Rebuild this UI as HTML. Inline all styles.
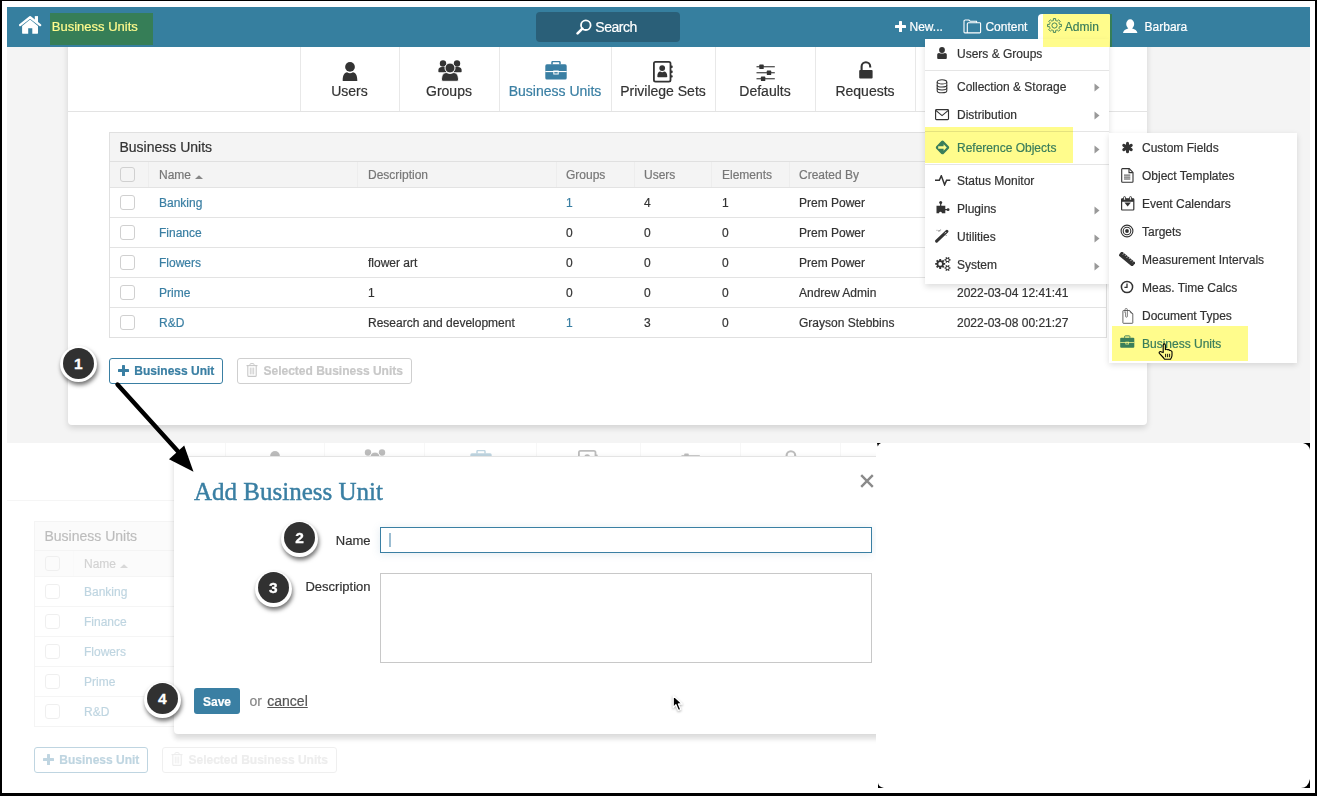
<!DOCTYPE html>
<html><head><meta charset="utf-8">
<style>
*{box-sizing:border-box;margin:0;padding:0}
html,body{width:1317px;height:796px;overflow:hidden;background:#000}
body{position:relative;font-family:"Liberation Sans",sans-serif;color:#333}
.a{position:absolute}
.t{position:absolute;line-height:1;white-space:nowrap;-webkit-text-stroke:0.2px currentColor}
#frame{position:absolute;left:2px;top:1px;width:1313px;height:792px;background:#fff}
#topclip{position:absolute;left:7px;top:7px;width:1303px;height:436px;overflow:hidden;background:#f4f4f4}
#topin{position:absolute;left:-7px;top:-7px;width:1317px;height:796px}
#botclip{position:absolute;left:7px;top:443px;width:869px;height:345px;overflow:hidden;background:#fff}
#botin{position:absolute;left:-7px;top:-443px;width:1317px;height:796px}
.circ{border-radius:50%;background:#333;border:2.5px solid #fff;box-shadow:1px 3px 4px rgba(0,0,0,.5);color:#fff;font-weight:bold;font-size:15px;text-align:center;line-height:28px}
</style></head><body>
<div id="frame"></div>
<div id="topclip"><div id="topin">
<div class="a" style="left:68px;top:-20px;width:1079px;height:445px;background:#fff;border-radius:4px;box-shadow:0 3px 6px rgba(0,0,0,.14)"></div>
<div class="a" style="left:300px;top:40px;width:1px;height:71px;background:#e8e8e8"></div>
<div class="a" style="left:399px;top:40px;width:1px;height:71px;background:#e8e8e8"></div>
<div class="a" style="left:499px;top:40px;width:1px;height:71px;background:#e8e8e8"></div>
<div class="a" style="left:611px;top:40px;width:1px;height:71px;background:#e8e8e8"></div>
<div class="a" style="left:715px;top:40px;width:1px;height:71px;background:#e8e8e8"></div>
<div class="a" style="left:815px;top:40px;width:1px;height:71px;background:#e8e8e8"></div>
<div class="a" style="left:915px;top:40px;width:1px;height:71px;background:#e8e8e8"></div>
<div class="a" style="left:68px;top:111px;width:1079px;height:1px;background:#e3e3e3"></div>
<div class="t" style="left:300.0px;width:99px;text-align:center;top:84.2px;font-size:14px;color:#333;">Users</div>
<div class="t" style="left:399.0px;width:100px;text-align:center;top:84.2px;font-size:14px;color:#333;">Groups</div>
<div class="t" style="left:499.0px;width:112px;text-align:center;top:84.2px;font-size:14px;color:#3a7fa3;">Business Units</div>
<div class="t" style="left:611.0px;width:104px;text-align:center;top:84.2px;font-size:14px;color:#333;">Privilege Sets</div>
<div class="t" style="left:715.0px;width:100px;text-align:center;top:84.2px;font-size:14px;color:#333;">Defaults</div>
<div class="t" style="left:815.0px;width:100px;text-align:center;top:84.2px;font-size:14px;color:#333;">Requests</div>
<svg class="a" style="left:342px;top:61.6px;" width="16" height="19.5" viewBox="0 0 16 20"><circle cx="8" cy="5" r="5" fill="#333"/><path d="M0.5 19 C0.5 14 2 11 5 10.6 Q8 12.6 11 10.6 C14 11 15.5 14 15.5 19 Q15.5 20 14.5 20 L1.5 20 Q0.5 20 0.5 19Z" fill="#333"/></svg>
<svg class="a" style="left:437.5px;top:60px;" width="24" height="22" viewBox="0 0 24 22">
<circle cx="5" cy="3.5" r="3.2" fill="#333"/><circle cx="19" cy="3.5" r="3.2" fill="#333"/>
<path d="M0.3 11 C0.3 8 1.5 7 4 7 L8 7 L8 12.3 L1 12.3 Q0.3 12.3 0.3 11Z" fill="#333"/>
<path d="M23.7 11 C23.7 8 22.5 7 20 7 L16 7 L16 12.3 L23 12.3 Q23.7 12.3 23.7 11Z" fill="#333"/>
<circle cx="12" cy="8" r="5" fill="#333" stroke="#fff" stroke-width="1"/>
<path d="M3.5 20 C3.5 15 5.5 12.6 8.5 12.6 Q12 14.6 15.5 12.6 C18.5 12.6 20.5 15 20.5 20 Q20.5 21.3 19 21.3 L5 21.3 Q3.5 21.3 3.5 20Z" fill="#333" stroke="#fff" stroke-width="0.9"/>
</svg>
<svg class="a" style="left:544.5px;top:60.5px;" width="22" height="19" viewBox="0 0 22 19">
<path d="M7 3.5 V1.6 Q7 0.6 8 0.6 H14 Q15 0.6 15 1.6 V3.5" fill="none" stroke="#3a7fa3" stroke-width="1.5"/>
<rect x="0.3" y="3.3" width="21.4" height="15.2" rx="1.6" fill="#3a7fa3"/>
<rect x="0.3" y="10" width="21.4" height="1.1" fill="#fff"/>
<rect x="8.8" y="10" width="4.4" height="3" fill="none" stroke="#fff" stroke-width="1"/>
</svg>
<svg class="a" style="left:652.5px;top:60.5px;" width="21" height="22" viewBox="0 0 21 22">
<rect x="0.9" y="0.9" width="16.6" height="19.7" rx="1.6" fill="none" stroke="#333" stroke-width="1.8"/>
<rect x="17.5" y="4.6" width="2.2" height="2.4" rx="0.8" fill="#333"/>
<rect x="17.5" y="9.6" width="2.2" height="2.4" rx="0.8" fill="#333"/>
<rect x="17.5" y="14.2" width="2.2" height="2.4" rx="0.8" fill="#333"/>
<circle cx="9.2" cy="7.1" r="2.9" fill="#333"/>
<path d="M4.3 15.5 C4.3 12.3 5.6 10.6 7.3 10.6 Q9.2 11.8 11.1 10.6 C12.8 10.6 14.3 12.3 14.3 15.5 Q14.3 16.3 13.5 16.3 L5.1 16.3 Q4.3 16.3 4.3 15.5Z" fill="#333"/>
</svg>
<svg class="a" style="left:756px;top:63.5px;" width="20" height="17" viewBox="0 0 20 17">
<rect x="0.5" y="2.2" width="18.3" height="1.1" fill="#333"/>
<rect x="0.5" y="8.2" width="18.3" height="1.1" fill="#333"/>
<rect x="0.5" y="14.2" width="18.3" height="1.1" fill="#333"/>
<rect x="3.3" y="0.6" width="4.4" height="4.4" rx="0.6" fill="#333"/>
<rect x="10.8" y="6.6" width="4.4" height="4.4" rx="0.6" fill="#333"/>
<rect x="4.9" y="12.6" width="4.4" height="4.4" rx="0.6" fill="#333"/>
</svg>
<svg class="a" style="left:859px;top:61px;" width="15" height="19" viewBox="0 0 15 19">
<path d="M2.6 9.5 V5.5 A4.3 4.3 0 0 1 11.2 5.5 V6.5" fill="none" stroke="#333" stroke-width="2.1"/>
<rect x="0.2" y="8.9" width="13.4" height="8.6" rx="1" fill="#333"/>
</svg>
<div class="a" style="left:109px;top:132px;width:998px;height:206px;border:1px solid #e0e0e0;background:#fff"></div>
<div class="a" style="left:110px;top:133px;width:996px;height:54px;background:#f4f4f4"></div>
<div class="a" style="left:110px;top:161px;width:996px;height:1px;background:#e0e0e0"></div>
<div class="a" style="left:110px;top:187px;width:996px;height:1px;background:#e3e3e3"></div>
<div class="a" style="left:110px;top:217px;width:996px;height:1px;background:#e3e3e3"></div>
<div class="a" style="left:110px;top:247px;width:996px;height:1px;background:#e3e3e3"></div>
<div class="a" style="left:110px;top:277px;width:996px;height:1px;background:#e3e3e3"></div>
<div class="a" style="left:110px;top:307px;width:996px;height:1px;background:#e3e3e3"></div>
<div class="a" style="left:148px;top:162px;width:1px;height:25px;background:#ededed"></div>
<div class="a" style="left:357px;top:162px;width:1px;height:25px;background:#ededed"></div>
<div class="a" style="left:556px;top:162px;width:1px;height:25px;background:#ededed"></div>
<div class="a" style="left:634px;top:162px;width:1px;height:25px;background:#ededed"></div>
<div class="a" style="left:711px;top:162px;width:1px;height:25px;background:#ededed"></div>
<div class="a" style="left:789px;top:162px;width:1px;height:25px;background:#ededed"></div>
<div class="a" style="left:946px;top:162px;width:1px;height:25px;background:#ededed"></div>
<div class="t" style="left:119.5px;top:140px;font-size:14px;color:#333;">Business Units</div>
<div class="a" style="left:120px;top:167px;width:15px;height:15px;border:1px solid #d0d0d0;border-radius:3px;background:#f4f4f4"></div>
<div class="t" style="left:159px;top:169px;font-size:12px;color:#777;">Name</div>
<div class="t" style="left:368px;top:169px;font-size:12px;color:#777;">Description</div>
<div class="t" style="left:566px;top:169px;font-size:12px;color:#777;">Groups</div>
<div class="t" style="left:644px;top:169px;font-size:12px;color:#777;">Users</div>
<div class="t" style="left:722px;top:169px;font-size:12px;color:#777;">Elements</div>
<div class="t" style="left:799px;top:169px;font-size:12px;color:#777;">Created By</div>
<div class="t" style="left:957px;top:169px;font-size:12px;color:#777;">Created</div>
<svg class="a" style="left:195px;top:174.5px;" width="8" height="4" viewBox="0 0 8 4"><path d="M0 4 L4 0.2 L8 4Z" fill="#888"/></svg>
<div class="a" style="left:120px;top:195px;width:15px;height:15px;border:1px solid #d0d0d0;border-radius:3px;background:#fff"></div>
<div class="t" style="left:159px;top:197px;font-size:12px;color:#3a7fa3;">Banking</div>
<div class="t" style="left:368px;top:197px;font-size:12px;color:#333;"></div>
<div class="t" style="left:566px;top:197px;font-size:12px;color:#3a7fa3;">1</div>
<div class="t" style="left:644px;top:197px;font-size:12px;color:#333;">4</div>
<div class="t" style="left:722px;top:197px;font-size:12px;color:#333;">1</div>
<div class="t" style="left:799px;top:197px;font-size:12px;color:#333;">Prem Power</div>
<div class="t" style="left:957px;top:197px;font-size:12px;color:#333;">2022-02-28 10:14:12</div>
<div class="a" style="left:120px;top:225px;width:15px;height:15px;border:1px solid #d0d0d0;border-radius:3px;background:#fff"></div>
<div class="t" style="left:159px;top:227px;font-size:12px;color:#3a7fa3;">Finance</div>
<div class="t" style="left:368px;top:227px;font-size:12px;color:#333;"></div>
<div class="t" style="left:566px;top:227px;font-size:12px;color:#333;">0</div>
<div class="t" style="left:644px;top:227px;font-size:12px;color:#333;">0</div>
<div class="t" style="left:722px;top:227px;font-size:12px;color:#333;">0</div>
<div class="t" style="left:799px;top:227px;font-size:12px;color:#333;">Prem Power</div>
<div class="t" style="left:957px;top:227px;font-size:12px;color:#333;">2022-02-28 10:14:40</div>
<div class="a" style="left:120px;top:255px;width:15px;height:15px;border:1px solid #d0d0d0;border-radius:3px;background:#fff"></div>
<div class="t" style="left:159px;top:257px;font-size:12px;color:#3a7fa3;">Flowers</div>
<div class="t" style="left:368px;top:257px;font-size:12px;color:#333;">flower art</div>
<div class="t" style="left:566px;top:257px;font-size:12px;color:#333;">0</div>
<div class="t" style="left:644px;top:257px;font-size:12px;color:#333;">0</div>
<div class="t" style="left:722px;top:257px;font-size:12px;color:#333;">0</div>
<div class="t" style="left:799px;top:257px;font-size:12px;color:#333;">Prem Power</div>
<div class="t" style="left:957px;top:257px;font-size:12px;color:#333;">2022-02-28 10:15:02</div>
<div class="a" style="left:120px;top:285px;width:15px;height:15px;border:1px solid #d0d0d0;border-radius:3px;background:#fff"></div>
<div class="t" style="left:159px;top:287px;font-size:12px;color:#3a7fa3;">Prime</div>
<div class="t" style="left:368px;top:287px;font-size:12px;color:#333;">1</div>
<div class="t" style="left:566px;top:287px;font-size:12px;color:#333;">0</div>
<div class="t" style="left:644px;top:287px;font-size:12px;color:#333;">0</div>
<div class="t" style="left:722px;top:287px;font-size:12px;color:#333;">0</div>
<div class="t" style="left:799px;top:287px;font-size:12px;color:#333;">Andrew Admin</div>
<div class="t" style="left:957px;top:287px;font-size:12px;color:#333;">2022-03-04 12:41:41</div>
<div class="a" style="left:120px;top:315px;width:15px;height:15px;border:1px solid #d0d0d0;border-radius:3px;background:#fff"></div>
<div class="t" style="left:159px;top:317px;font-size:12px;color:#3a7fa3;">R&amp;D</div>
<div class="t" style="left:368px;top:317px;font-size:12px;color:#333;">Research and development</div>
<div class="t" style="left:566px;top:317px;font-size:12px;color:#3a7fa3;">1</div>
<div class="t" style="left:644px;top:317px;font-size:12px;color:#333;">3</div>
<div class="t" style="left:722px;top:317px;font-size:12px;color:#333;">0</div>
<div class="t" style="left:799px;top:317px;font-size:12px;color:#333;">Grayson Stebbins</div>
<div class="t" style="left:957px;top:317px;font-size:12px;color:#333;">2022-03-08 00:21:27</div>
<div class="a" style="left:109px;top:358px;width:114px;height:26px;border:1px solid #3a7fa3;border-radius:3px;background:#fff"></div>
<svg class="a" style="left:118px;top:365px;" width="11" height="11" viewBox="0 0 11 11"><rect x="0" y="4.0" width="11" height="3" rx="0.6" fill="#3a7fa3"/><rect x="4.0" y="0" width="3" height="11" rx="0.6" fill="#3a7fa3"/></svg>
<div class="t" style="left:134.3px;top:365px;font-size:12px;color:#3a7fa3;font-weight:bold;">Business Unit</div>
<div class="a" style="left:237px;top:358px;width:175px;height:26px;border:1px solid #cfcfcf;border-radius:3px;background:#fff"></div>
<svg class="a" style="left:246px;top:362.8px;" width="12" height="14" viewBox="0 0 12 14">
<path d="M0.5 2.6 H11.5" stroke="#c8c8c8" stroke-width="1.1"/>
<path d="M4 2.6 V1.4 Q4 0.6 4.8 0.6 H7.2 Q8 0.6 8 1.4 V2.6" fill="none" stroke="#c8c8c8" stroke-width="1"/>
<path d="M1.8 2.6 V12.4 Q1.8 13.4 2.8 13.4 H9.2 Q10.2 13.4 10.2 12.4 V2.6" fill="none" stroke="#c8c8c8" stroke-width="1.1"/>
<path d="M4.3 4.6 V11.4 M6 4.6 V11.4 M7.7 4.6 V11.4" stroke="#c8c8c8" stroke-width="0.9"/>
</svg>
<div class="t" style="left:263.5px;top:365px;font-size:12px;color:#c8c8c8;font-weight:bold;">Selected Business Units</div>
<div class="a" style="left:0px;top:7px;width:1317px;height:40px;background:#367f9f"></div>
<svg class="a" style="left:19px;top:15px;" width="23" height="20" viewBox="0 0 23 20">
<path d="M1.1 10.1 L11.1 2.3 L21.1 10.1" fill="none" stroke="#fff" stroke-width="2.4" stroke-linecap="round" stroke-linejoin="round"/>
<rect x="15.8" y="1.1" width="3.2" height="6" fill="#fff"/>
<path d="M3.1 10.9 L11.1 4.6 L19 10.9 V18.1 Q19 18.7 18.4 18.7 H13.3 V13.2 H9.2 V18.7 H3.7 Q3.1 18.7 3.1 18.1Z" fill="#fff"/>
</svg>
<div class="a" style="left:536px;top:12px;width:144px;height:30px;background:#2a5f78;border-radius:4px"></div>
<svg class="a" style="left:575.5px;top:19px;" width="16" height="16" viewBox="0 0 16 16">
<circle cx="9.8" cy="6.2" r="4.8" fill="none" stroke="#fff" stroke-width="1.8"/>
<path d="M6.4 9.6 L1.6 14.4" stroke="#fff" stroke-width="2.6" stroke-linecap="round"/>
</svg>
<div class="t" style="left:595.3px;top:20px;font-size:14px;color:#fff;letter-spacing:-0.45px;">Search</div>
<svg class="a" style="left:894.8px;top:21px;" width="11" height="11" viewBox="0 0 11 11"><rect x="0" y="4.0" width="11" height="3" rx="0.6" fill="#fff"/><rect x="4.0" y="0" width="3" height="11" rx="0.6" fill="#fff"/></svg>
<div class="t" style="left:909.5px;top:21px;font-size:12px;color:#fff;">New...</div>
<svg class="a" style="left:962.5px;top:18.5px;" width="19" height="15" viewBox="0 0 19 15">
<path d="M1 13 V2.2 Q1 1 2.2 1 H5.8 L7.1 2.2 H13.6 V3.7" fill="none" stroke="#fff" stroke-width="1.1" stroke-linejoin="round"/>
<path d="M4.3 13.9 V4.9 Q4.3 3.7 5.5 3.7 H16.7 Q17.6 3.7 17.6 4.6 V13 Q17.6 13.9 16.7 13.9 H2 Q1 13.9 1 13" fill="none" stroke="#fff" stroke-width="1.1" stroke-linejoin="round"/>
</svg>
<div class="t" style="left:985.4px;top:21px;font-size:12px;color:#fff;">Content</div>
<svg class="a" style="left:1123px;top:18.8px;" width="15" height="15" viewBox="0 0 15 15"><ellipse cx="7.2" cy="4.9" rx="4" ry="4.6" fill="#fff"/><path d="M5.3 8.6 H9.1 L9.3 9.6 Q13.6 10.6 14.3 13.6 V14.1 H0.1 V13.6 Q0.8 10.6 5.1 9.6Z" fill="#fff"/></svg>
<div class="t" style="left:1144.6px;top:21px;font-size:12px;color:#fff;">Barbara</div>
<div class="a" style="left:1038px;top:14px;width:72px;height:40px;background:#fff;border-radius:4px 1px 0 0"></div>
<svg class="a" style="left:1046.5px;top:18.4px;" width="15" height="15" viewBox="0 0 15 15"><path d="M6.35 2.53 L6.35 0.60 L8.65 0.60 L8.65 2.53 A5.1 5.1 0 0 1 10.20 3.17 L11.57 1.81 L13.19 3.43 L11.83 4.80 A5.1 5.1 0 0 1 12.47 6.35 L14.40 6.35 L14.40 8.65 L12.47 8.65 A5.1 5.1 0 0 1 11.83 10.20 L13.19 11.57 L11.57 13.19 L10.20 11.83 A5.1 5.1 0 0 1 8.65 12.47 L8.65 14.40 L6.35 14.40 L6.35 12.47 A5.1 5.1 0 0 1 4.80 11.83 L3.43 13.19 L1.81 11.57 L3.17 10.20 A5.1 5.1 0 0 1 2.53 8.65 L0.60 8.65 L0.60 6.35 L2.53 6.35 A5.1 5.1 0 0 1 3.17 4.80 L1.81 3.43 L3.43 1.81 L4.80 3.17 A5.1 5.1 0 0 1 6.35 2.53Z" fill="none" stroke="#3a7fa3" stroke-width="0.95" stroke-linejoin="round"/><circle cx="7.5" cy="7.5" r="2.6" fill="none" stroke="#3a7fa3" stroke-width="0.95"/></svg>
<div class="t" style="left:1064.8px;top:21px;font-size:12px;color:#3a7fa3;">Admin</div>
<div class="t" style="left:51.8px;top:19.8px;font-size:13px;color:#fff;">Business Units</div>
<div class="a" style="left:50px;top:13px;width:103px;height:32px;background:#fffc8c;mix-blend-mode:multiply"></div>
<div class="a" style="left:925px;top:39px;width:184px;height:245px;background:#fff;box-shadow:0 3px 6px rgba(0,0,0,.13)"></div>
<div class="a" style="left:925px;top:70px;width:184px;height:1px;background:#e5e5e5"></div>
<div class="a" style="left:925px;top:131px;width:184px;height:1px;background:#e5e5e5"></div>
<div class="a" style="left:925px;top:164px;width:184px;height:1px;background:#e5e5e5"></div>
<div class="t" style="left:957px;top:48px;font-size:12px;color:#333;">Users &amp; Groups</div>
<div class="t" style="left:957px;top:80.6px;font-size:12px;color:#333;">Collection &amp; Storage</div>
<svg class="a" style="left:1093.5px;top:83.1px;" width="6" height="9" viewBox="0 0 6 9"><path d="M0.5 0.5 L5.5 4.5 L0.5 8.5Z" fill="#999"/></svg>
<div class="t" style="left:957px;top:108.7px;font-size:12px;color:#333;">Distribution</div>
<svg class="a" style="left:1093.5px;top:111.2px;" width="6" height="9" viewBox="0 0 6 9"><path d="M0.5 0.5 L5.5 4.5 L0.5 8.5Z" fill="#999"/></svg>
<div class="t" style="left:957px;top:142px;font-size:12px;color:#3a7fa3;">Reference Objects</div>
<svg class="a" style="left:1093.5px;top:144.5px;" width="6" height="9" viewBox="0 0 6 9"><path d="M0.5 0.5 L5.5 4.5 L0.5 8.5Z" fill="#999"/></svg>
<div class="t" style="left:957px;top:175px;font-size:12px;color:#333;">Status Monitor</div>
<div class="t" style="left:957px;top:203px;font-size:12px;color:#333;">Plugins</div>
<svg class="a" style="left:1093.5px;top:205.5px;" width="6" height="9" viewBox="0 0 6 9"><path d="M0.5 0.5 L5.5 4.5 L0.5 8.5Z" fill="#999"/></svg>
<div class="t" style="left:957px;top:231px;font-size:12px;color:#333;">Utilities</div>
<svg class="a" style="left:1093.5px;top:233.5px;" width="6" height="9" viewBox="0 0 6 9"><path d="M0.5 0.5 L5.5 4.5 L0.5 8.5Z" fill="#999"/></svg>
<div class="t" style="left:957px;top:259px;font-size:12px;color:#333;">System</div>
<svg class="a" style="left:1093.5px;top:261.5px;" width="6" height="9" viewBox="0 0 6 9"><path d="M0.5 0.5 L5.5 4.5 L0.5 8.5Z" fill="#999"/></svg>
<svg class="a" style="left:937.2px;top:46.9px;" width="11" height="13" viewBox="0 0 11 13"><circle cx="5" cy="3" r="2.9" fill="#333"/><path d="M0.2 7.6 Q0.2 5.9 2 5.9 Q5 7.1 8 5.9 Q9.8 5.9 9.8 7.6 V11 Q9.8 11.9 8.9 11.9 H1.1 Q0.2 11.9 0.2 11Z" fill="#333"/></svg>
<svg class="a" style="left:936px;top:79px;" width="12" height="15" viewBox="0 0 12 15">
<ellipse cx="6" cy="2.9" rx="4.8" ry="2.1" fill="none" stroke="#333" stroke-width="1.05"/>
<path d="M1.2 2.9 V11.7 Q1.2 13.8 6 13.8 Q10.8 13.8 10.8 11.7 V2.9" fill="none" stroke="#333" stroke-width="1.05"/>
<path d="M1.2 5.9 Q1.2 8 6 8 Q10.8 8 10.8 5.9" fill="none" stroke="#333" stroke-width="1.05"/>
<path d="M1.2 8.8 Q1.2 10.9 6 10.9 Q10.8 10.9 10.8 8.8" fill="none" stroke="#333" stroke-width="1.05"/>
</svg>
<svg class="a" style="left:935px;top:108.5px;" width="15" height="12" viewBox="0 0 15 12">
<rect x="0.6" y="0.6" width="12.9" height="10" rx="0.9" fill="none" stroke="#333" stroke-width="1.15"/>
<path d="M0.8 1.4 L7.05 6.6 L13.3 1.4" fill="none" stroke="#333" stroke-width="1.15"/>
</svg>
<svg class="a" style="left:935px;top:140px;" width="15" height="15" viewBox="0 0 15 15">
<path d="M7.5 0.6 Q8.1 0.6 8.6 1.1 L13.9 6.4 Q14.5 7 13.9 8.6 L8.6 13.9 Q8 14.5 6.4 13.9 L1.1 8.6 Q0.5 8 1.1 6.4 L6.4 1.1 Q6.9 0.6 7.5 0.6Z" fill="#3a7fa3"/>
<path d="M3.2 6.3 H8.6 V4.2 L11.8 7.5 L8.6 10.8 V8.7 H3.2Z" fill="#fff"/>
</svg>
<svg class="a" style="left:934.5px;top:175px;" width="16" height="11" viewBox="0 0 16 11"><path d="M0 5.3 H4.3 L6.3 0.8 L9.6 9.8 L11.6 5.2 H15.3" fill="none" stroke="#333" stroke-width="1.5" stroke-linejoin="miter"/></svg>
<svg class="a" style="left:935.5px;top:200.5px;" width="14" height="13" viewBox="0 0 14 13">
<path d="M0.5 4.7 H4.1 V1.5 H5.3 V4.7 H9.3 V8.1 H12 V9.3 H9.3 V12.2 H5.9 A1.4 1.4 0 0 0 3.1 12.2 H0.5Z" fill="#333"/>
<circle cx="4.7" cy="1.6" r="1.5" fill="#333"/><circle cx="12.1" cy="8.7" r="1.4" fill="#333"/>
</svg>
<svg class="a" style="left:935px;top:229px;" width="14" height="14" viewBox="0 0 14 14">
<path d="M1.6 12.1 L11.9 2.3" stroke="#333" stroke-width="3" stroke-linecap="round"/>
<path d="M9.8 4.4 L11.2 3" stroke="#fff" stroke-width="0.8"/>
<path d="M3.6 2.4 L4.6 1.4 M3.6 1.4 L4.6 2.4 M2 0.9 V1.6 M5.6 0.6 V1.4 M11.2 6.1 V6.9" stroke="#333" stroke-width="0.7"/>
</svg>
<svg class="a" style="left:933.5px;top:256px;" width="17" height="17" viewBox="0 0 17 17"><path d="M5.25 4.32 L5.25 2.90 L7.15 2.90 L7.15 4.32 A3.7 3.7 0 0 1 8.06 4.70 L9.06 3.69 L10.41 5.04 L9.40 6.04 A3.7 3.7 0 0 1 9.78 6.95 L11.20 6.95 L11.20 8.85 L9.78 8.85 A3.7 3.7 0 0 1 9.40 9.76 L10.41 10.76 L9.06 12.11 L8.06 11.10 A3.7 3.7 0 0 1 7.15 11.48 L7.15 12.90 L5.25 12.90 L5.25 11.48 A3.7 3.7 0 0 1 4.34 11.10 L3.34 12.11 L1.99 10.76 L3.00 9.76 A3.7 3.7 0 0 1 2.62 8.85 L1.20 8.85 L1.20 6.95 L2.62 6.95 A3.7 3.7 0 0 1 3.00 6.04 L1.99 5.04 L3.34 3.69 L4.34 4.70 A3.7 3.7 0 0 1 5.25 4.32Z" fill="#333"/><circle cx="6.2" cy="7.9" r="1.9" fill="#fff"/><path d="M15.62 3.30 L16.60 3.30 L16.60 4.50 L15.62 4.50 A2.2 2.2 0 0 1 15.08 5.43 L15.57 6.28 L14.53 6.88 L14.04 6.03 A2.2 2.2 0 0 1 12.96 6.03 L12.47 6.88 L11.43 6.28 L11.92 5.43 A2.2 2.2 0 0 1 11.38 4.50 L10.40 4.50 L10.40 3.30 L11.38 3.30 A2.2 2.2 0 0 1 11.92 2.37 L11.43 1.52 L12.47 0.92 L12.96 1.77 A2.2 2.2 0 0 1 14.04 1.77 L14.53 0.92 L15.57 1.52 L15.08 2.37 A2.2 2.2 0 0 1 15.62 3.30Z" fill="#333"/><circle cx="13.5" cy="3.9" r="1.2" fill="#fff"/><path d="M15.62 11.40 L16.60 11.40 L16.60 12.60 L15.62 12.60 A2.2 2.2 0 0 1 15.08 13.53 L15.57 14.38 L14.53 14.98 L14.04 14.13 A2.2 2.2 0 0 1 12.96 14.13 L12.47 14.98 L11.43 14.38 L11.92 13.53 A2.2 2.2 0 0 1 11.38 12.60 L10.40 12.60 L10.40 11.40 L11.38 11.40 A2.2 2.2 0 0 1 11.92 10.47 L11.43 9.62 L12.47 9.02 L12.96 9.87 A2.2 2.2 0 0 1 14.04 9.87 L14.53 9.02 L15.57 9.62 L15.08 10.47 A2.2 2.2 0 0 1 15.62 11.40Z" fill="#333"/><circle cx="13.5" cy="12" r="1.2" fill="#fff"/></svg>
<div class="a" style="left:1043px;top:14px;width:68.5px;height:33px;background:#fffc8c;mix-blend-mode:multiply"></div>
<div class="a" style="left:925px;top:127px;width:148px;height:36px;background:#fffc8c;mix-blend-mode:multiply"></div>
<div class="a" style="left:1109px;top:133px;width:188px;height:230px;background:#fff;box-shadow:0 2px 6px rgba(0,0,0,.13)"></div>
<div class="t" style="left:1142px;top:142.3px;font-size:12px;color:#333;">Custom Fields</div>
<div class="t" style="left:1142px;top:170.3px;font-size:12px;color:#333;">Object Templates</div>
<div class="t" style="left:1142px;top:198.3px;font-size:12px;color:#333;">Event Calendars</div>
<div class="t" style="left:1142px;top:226.3px;font-size:12px;color:#333;">Targets</div>
<div class="t" style="left:1142px;top:254.3px;font-size:12px;color:#333;">Measurement Intervals</div>
<div class="t" style="left:1142px;top:282.3px;font-size:12px;color:#333;">Meas. Time Calcs</div>
<div class="t" style="left:1142px;top:310.3px;font-size:12px;color:#333;">Document Types</div>
<div class="t" style="left:1142px;top:338.3px;font-size:12px;color:#3a7fa3;">Business Units</div>
<svg class="a" style="left:1120.8px;top:140.5px;" width="13" height="13" viewBox="0 0 13 13"><circle cx="6.5" cy="6.5" r="3" fill="#333"/><rect x="-1.5" y="-5.8" width="3" height="11.6" rx="1.5" fill="#333" transform="translate(6.5 6.5) rotate(0)"/><rect x="-1.5" y="-5.8" width="3" height="11.6" rx="1.5" fill="#333" transform="translate(6.5 6.5) rotate(-60)"/><rect x="-1.5" y="-5.8" width="3" height="11.6" rx="1.5" fill="#333" transform="translate(6.5 6.5) rotate(60)"/></svg>
<svg class="a" style="left:1121px;top:167.5px;" width="13" height="15" viewBox="0 0 13 15">
<path d="M0.7 1.3 Q0.7 0.6 1.4 0.6 H8.2 L12 4.4 V13.6 Q12 14.3 11.3 14.3 H1.4 Q0.7 14.3 0.7 13.6Z" fill="none" stroke="#333" stroke-width="1.1"/>
<path d="M8 0.8 V4.6 H11.8" fill="none" stroke="#333" stroke-width="1.1"/>
<path d="M3 7.1 H9.3 M3 9.1 H9.3 M3 11 H9.3" stroke="#333" stroke-width="0.9"/>
</svg>
<svg class="a" style="left:1120.5px;top:195.5px;" width="14" height="15" viewBox="0 0 14 15">
<rect x="0.6" y="2.8" width="12.2" height="11.2" rx="0.7" fill="none" stroke="#333" stroke-width="1.2"/>
<rect x="0.6" y="2.8" width="12.2" height="3" fill="#333"/>
<rect x="2.6" y="0.7" width="1.9" height="3.4" rx="0.6" fill="#fff" stroke="#333" stroke-width="0.9"/>
<rect x="8.6" y="0.7" width="1.9" height="3.4" rx="0.6" fill="#fff" stroke="#333" stroke-width="0.9"/>
<path d="M3.4 6.4 H9.9 L6.65 10.5Z" fill="#333"/>
</svg>
<svg class="a" style="left:1120px;top:224px;" width="14" height="14" viewBox="0 0 14 14">
<circle cx="7" cy="7" r="5.9" fill="none" stroke="#333" stroke-width="1.1"/>
<circle cx="7" cy="7" r="3.8" fill="none" stroke="#333" stroke-width="1.1"/>
<circle cx="7" cy="7" r="1.9" fill="#333"/>
</svg>
<svg class="a" style="left:1119px;top:252.2px;" width="16" height="14" viewBox="0 0 16 14">
<g transform="translate(8 7) rotate(40)">
<rect x="-9" y="-2.6" width="18" height="5.2" fill="#333"/>
<path d="M-6 -2.6 V-0.6 M-3.5 -2.6 V-1.2 M-1 -2.6 V-0.6 M1.5 -2.6 V-1.2 M4 -2.6 V-0.6 M6.5 -2.6 V-1.2" stroke="#fff" stroke-width="0.6"/>
</g></svg>
<svg class="a" style="left:1119.9px;top:279.8px;" width="14" height="14" viewBox="0 0 14 14">
<circle cx="7" cy="7" r="5.6" fill="none" stroke="#333" stroke-width="1.5"/>
<path d="M7 3.4 V7.3 H4.4" fill="none" stroke="#333" stroke-width="1.3"/>
</svg>
<svg class="a" style="left:1121.5px;top:307.5px;" width="12" height="16" viewBox="0 0 12 16">
<path d="M0.9 3 Q0.9 2.5 1.4 2.5 H7.6 L10.8 5.7 V14.8 Q10.8 15.3 10.3 15.3 H1.4 Q0.9 15.3 0.9 14.8Z" fill="none" stroke="#555" stroke-width="0.9"/>
<path d="M7.6 2.6 L8.6 4.8 L10.7 5.7" fill="none" stroke="#555" stroke-width="0.8"/>
<path d="M3 5 V1.6 Q3 0.5 4.2 0.5 Q5.4 0.5 5.4 1.6 V8.3 Q5.4 9.2 4.5 9.2 Q3.6 9.2 3.6 8.3 V4.5" fill="none" stroke="#555" stroke-width="0.75"/>
</svg>
<svg class="a" style="left:1120px;top:334.5px;" width="14.5" height="13.5" viewBox="0 0 22 19">
<path d="M7 3.5 V1.6 Q7 0.6 8 0.6 H14 Q15 0.6 15 1.6 V3.5" fill="none" stroke="#3a7fa3" stroke-width="1.5"/>
<rect x="0.3" y="3.3" width="21.4" height="15.2" rx="1.6" fill="#3a7fa3"/>
<rect x="0.3" y="10" width="21.4" height="1.1" fill="#fff"/>
<rect x="8.8" y="10" width="4.4" height="3" fill="none" stroke="#fff" stroke-width="1"/>
</svg>
<svg class="a" style="left:1158px;top:343px;" width="17" height="18" viewBox="0 0 17 18"><path d="M5.2 9.6 V2.2 Q5.2 0.9 6.3 0.9 Q7.4 0.9 7.4 2.2 V6.6 Q8.6 5.9 9.7 6.8 Q11 6.3 11.8 7.5 Q13.4 7.2 14 8.7 V12.3 Q14 14.4 12.6 16.2 H6.6 Q5.3 14.3 3.9 13 L1.4 10.4 Q0.7 9.3 1.8 8.7 Q2.7 8.3 3.6 9 Z" fill="#fff" stroke="#000" stroke-width="1.1" stroke-linejoin="round"/><path d="M7.6 10.8 V14.2 M9.6 10.8 V14.2 M11.6 10.8 V14.2" stroke="#000" stroke-width="0.9"/></svg>
<div class="a" style="left:1112px;top:326px;width:136px;height:35px;background:#fffc8c;mix-blend-mode:multiply"></div>
</div></div>
<div id="botclip"><div id="botin">
<div class="a" style="left:-7px;top:380px;width:1079px;height:445px;background:#fff"></div>
<div class="a" style="left:0;top:0;width:1317px;height:796px;opacity:.32">
<div class="a" style="left:225px;top:429px;width:1px;height:71px;background:#e8e8e8"></div>
<div class="a" style="left:324px;top:429px;width:1px;height:71px;background:#e8e8e8"></div>
<div class="a" style="left:424px;top:429px;width:1px;height:71px;background:#e8e8e8"></div>
<div class="a" style="left:536px;top:429px;width:1px;height:71px;background:#e8e8e8"></div>
<div class="a" style="left:640px;top:429px;width:1px;height:71px;background:#e8e8e8"></div>
<div class="a" style="left:740px;top:429px;width:1px;height:71px;background:#e8e8e8"></div>
<div class="a" style="left:840px;top:429px;width:1px;height:71px;background:#e8e8e8"></div>
<div class="a" style="left:-7px;top:500px;width:1079px;height:1px;background:#e3e3e3"></div>
<div class="t" style="left:225.0px;width:99px;text-align:center;top:473.2px;font-size:14px;color:#333;">Users</div>
<div class="t" style="left:324.0px;width:100px;text-align:center;top:473.2px;font-size:14px;color:#333;">Groups</div>
<div class="t" style="left:424.0px;width:112px;text-align:center;top:473.2px;font-size:14px;color:#3a7fa3;">Business Units</div>
<div class="t" style="left:536.0px;width:104px;text-align:center;top:473.2px;font-size:14px;color:#333;">Privilege Sets</div>
<div class="t" style="left:640.0px;width:100px;text-align:center;top:473.2px;font-size:14px;color:#333;">Defaults</div>
<div class="t" style="left:740.0px;width:100px;text-align:center;top:473.2px;font-size:14px;color:#333;">Requests</div>
<svg class="a" style="left:267px;top:450.6px;" width="16" height="19.5" viewBox="0 0 16 20"><circle cx="8" cy="5" r="5" fill="#333"/><path d="M0.5 19 C0.5 14 2 11 5 10.6 Q8 12.6 11 10.6 C14 11 15.5 14 15.5 19 Q15.5 20 14.5 20 L1.5 20 Q0.5 20 0.5 19Z" fill="#333"/></svg>
<svg class="a" style="left:362.5px;top:449px;" width="24" height="22" viewBox="0 0 24 22">
<circle cx="5" cy="3.5" r="3.2" fill="#333"/><circle cx="19" cy="3.5" r="3.2" fill="#333"/>
<path d="M0.3 11 C0.3 8 1.5 7 4 7 L8 7 L8 12.3 L1 12.3 Q0.3 12.3 0.3 11Z" fill="#333"/>
<path d="M23.7 11 C23.7 8 22.5 7 20 7 L16 7 L16 12.3 L23 12.3 Q23.7 12.3 23.7 11Z" fill="#333"/>
<circle cx="12" cy="8" r="5" fill="#333" stroke="#fff" stroke-width="1"/>
<path d="M3.5 20 C3.5 15 5.5 12.6 8.5 12.6 Q12 14.6 15.5 12.6 C18.5 12.6 20.5 15 20.5 20 Q20.5 21.3 19 21.3 L5 21.3 Q3.5 21.3 3.5 20Z" fill="#333" stroke="#fff" stroke-width="0.9"/>
</svg>
<svg class="a" style="left:469.5px;top:449.5px;" width="22" height="19" viewBox="0 0 22 19">
<path d="M7 3.5 V1.6 Q7 0.6 8 0.6 H14 Q15 0.6 15 1.6 V3.5" fill="none" stroke="#3a7fa3" stroke-width="1.5"/>
<rect x="0.3" y="3.3" width="21.4" height="15.2" rx="1.6" fill="#3a7fa3"/>
<rect x="0.3" y="10" width="21.4" height="1.1" fill="#fff"/>
<rect x="8.8" y="10" width="4.4" height="3" fill="none" stroke="#fff" stroke-width="1"/>
</svg>
<svg class="a" style="left:577.5px;top:449.5px;" width="21" height="22" viewBox="0 0 21 22">
<rect x="0.9" y="0.9" width="16.6" height="19.7" rx="1.6" fill="none" stroke="#333" stroke-width="1.8"/>
<rect x="17.5" y="4.6" width="2.2" height="2.4" rx="0.8" fill="#333"/>
<rect x="17.5" y="9.6" width="2.2" height="2.4" rx="0.8" fill="#333"/>
<rect x="17.5" y="14.2" width="2.2" height="2.4" rx="0.8" fill="#333"/>
<circle cx="9.2" cy="7.1" r="2.9" fill="#333"/>
<path d="M4.3 15.5 C4.3 12.3 5.6 10.6 7.3 10.6 Q9.2 11.8 11.1 10.6 C12.8 10.6 14.3 12.3 14.3 15.5 Q14.3 16.3 13.5 16.3 L5.1 16.3 Q4.3 16.3 4.3 15.5Z" fill="#333"/>
</svg>
<svg class="a" style="left:681px;top:452.5px;" width="20" height="17" viewBox="0 0 20 17">
<rect x="0.5" y="2.2" width="18.3" height="1.1" fill="#333"/>
<rect x="0.5" y="8.2" width="18.3" height="1.1" fill="#333"/>
<rect x="0.5" y="14.2" width="18.3" height="1.1" fill="#333"/>
<rect x="3.3" y="0.6" width="4.4" height="4.4" rx="0.6" fill="#333"/>
<rect x="10.8" y="6.6" width="4.4" height="4.4" rx="0.6" fill="#333"/>
<rect x="4.9" y="12.6" width="4.4" height="4.4" rx="0.6" fill="#333"/>
</svg>
<svg class="a" style="left:784px;top:450px;" width="15" height="19" viewBox="0 0 15 19">
<path d="M2.6 9.5 V5.5 A4.3 4.3 0 0 1 11.2 5.5 V6.5" fill="none" stroke="#333" stroke-width="2.1"/>
<rect x="0.2" y="8.9" width="13.4" height="8.6" rx="1" fill="#333"/>
</svg>
<div class="a" style="left:34px;top:521px;width:998px;height:206px;border:1px solid #e0e0e0;background:#fff"></div>
<div class="a" style="left:35px;top:522px;width:996px;height:54px;background:#f4f4f4"></div>
<div class="a" style="left:35px;top:550px;width:996px;height:1px;background:#e0e0e0"></div>
<div class="a" style="left:35px;top:576px;width:996px;height:1px;background:#e3e3e3"></div>
<div class="a" style="left:35px;top:606px;width:996px;height:1px;background:#e3e3e3"></div>
<div class="a" style="left:35px;top:636px;width:996px;height:1px;background:#e3e3e3"></div>
<div class="a" style="left:35px;top:666px;width:996px;height:1px;background:#e3e3e3"></div>
<div class="a" style="left:35px;top:696px;width:996px;height:1px;background:#e3e3e3"></div>
<div class="a" style="left:73px;top:551px;width:1px;height:25px;background:#ededed"></div>
<div class="a" style="left:282px;top:551px;width:1px;height:25px;background:#ededed"></div>
<div class="a" style="left:481px;top:551px;width:1px;height:25px;background:#ededed"></div>
<div class="a" style="left:559px;top:551px;width:1px;height:25px;background:#ededed"></div>
<div class="a" style="left:636px;top:551px;width:1px;height:25px;background:#ededed"></div>
<div class="a" style="left:714px;top:551px;width:1px;height:25px;background:#ededed"></div>
<div class="a" style="left:871px;top:551px;width:1px;height:25px;background:#ededed"></div>
<div class="t" style="left:44.5px;top:529px;font-size:14px;color:#333;">Business Units</div>
<div class="a" style="left:45px;top:556px;width:15px;height:15px;border:1px solid #d0d0d0;border-radius:3px;background:#f4f4f4"></div>
<div class="t" style="left:84px;top:558px;font-size:12px;color:#777;">Name</div>
<div class="t" style="left:293px;top:558px;font-size:12px;color:#777;">Description</div>
<div class="t" style="left:491px;top:558px;font-size:12px;color:#777;">Groups</div>
<div class="t" style="left:569px;top:558px;font-size:12px;color:#777;">Users</div>
<div class="t" style="left:647px;top:558px;font-size:12px;color:#777;">Elements</div>
<div class="t" style="left:724px;top:558px;font-size:12px;color:#777;">Created By</div>
<div class="t" style="left:882px;top:558px;font-size:12px;color:#777;">Created</div>
<svg class="a" style="left:120px;top:563.5px;" width="8" height="4" viewBox="0 0 8 4"><path d="M0 4 L4 0.2 L8 4Z" fill="#888"/></svg>
<div class="a" style="left:45px;top:584px;width:15px;height:15px;border:1px solid #d0d0d0;border-radius:3px;background:#fff"></div>
<div class="t" style="left:84px;top:586px;font-size:12px;color:#3a7fa3;">Banking</div>
<div class="t" style="left:293px;top:586px;font-size:12px;color:#333;"></div>
<div class="t" style="left:491px;top:586px;font-size:12px;color:#3a7fa3;">1</div>
<div class="t" style="left:569px;top:586px;font-size:12px;color:#333;">4</div>
<div class="t" style="left:647px;top:586px;font-size:12px;color:#333;">1</div>
<div class="t" style="left:724px;top:586px;font-size:12px;color:#333;">Prem Power</div>
<div class="t" style="left:882px;top:586px;font-size:12px;color:#333;">2022-02-28 10:14:12</div>
<div class="a" style="left:45px;top:614px;width:15px;height:15px;border:1px solid #d0d0d0;border-radius:3px;background:#fff"></div>
<div class="t" style="left:84px;top:616px;font-size:12px;color:#3a7fa3;">Finance</div>
<div class="t" style="left:293px;top:616px;font-size:12px;color:#333;"></div>
<div class="t" style="left:491px;top:616px;font-size:12px;color:#333;">0</div>
<div class="t" style="left:569px;top:616px;font-size:12px;color:#333;">0</div>
<div class="t" style="left:647px;top:616px;font-size:12px;color:#333;">0</div>
<div class="t" style="left:724px;top:616px;font-size:12px;color:#333;">Prem Power</div>
<div class="t" style="left:882px;top:616px;font-size:12px;color:#333;">2022-02-28 10:14:40</div>
<div class="a" style="left:45px;top:644px;width:15px;height:15px;border:1px solid #d0d0d0;border-radius:3px;background:#fff"></div>
<div class="t" style="left:84px;top:646px;font-size:12px;color:#3a7fa3;">Flowers</div>
<div class="t" style="left:293px;top:646px;font-size:12px;color:#333;">flower art</div>
<div class="t" style="left:491px;top:646px;font-size:12px;color:#333;">0</div>
<div class="t" style="left:569px;top:646px;font-size:12px;color:#333;">0</div>
<div class="t" style="left:647px;top:646px;font-size:12px;color:#333;">0</div>
<div class="t" style="left:724px;top:646px;font-size:12px;color:#333;">Prem Power</div>
<div class="t" style="left:882px;top:646px;font-size:12px;color:#333;">2022-02-28 10:15:02</div>
<div class="a" style="left:45px;top:674px;width:15px;height:15px;border:1px solid #d0d0d0;border-radius:3px;background:#fff"></div>
<div class="t" style="left:84px;top:676px;font-size:12px;color:#3a7fa3;">Prime</div>
<div class="t" style="left:293px;top:676px;font-size:12px;color:#333;">1</div>
<div class="t" style="left:491px;top:676px;font-size:12px;color:#333;">0</div>
<div class="t" style="left:569px;top:676px;font-size:12px;color:#333;">0</div>
<div class="t" style="left:647px;top:676px;font-size:12px;color:#333;">0</div>
<div class="t" style="left:724px;top:676px;font-size:12px;color:#333;">Andrew Admin</div>
<div class="t" style="left:882px;top:676px;font-size:12px;color:#333;">2022-03-04 12:41:41</div>
<div class="a" style="left:45px;top:704px;width:15px;height:15px;border:1px solid #d0d0d0;border-radius:3px;background:#fff"></div>
<div class="t" style="left:84px;top:706px;font-size:12px;color:#3a7fa3;">R&amp;D</div>
<div class="t" style="left:293px;top:706px;font-size:12px;color:#333;">Research and development</div>
<div class="t" style="left:491px;top:706px;font-size:12px;color:#3a7fa3;">1</div>
<div class="t" style="left:569px;top:706px;font-size:12px;color:#333;">3</div>
<div class="t" style="left:647px;top:706px;font-size:12px;color:#333;">0</div>
<div class="t" style="left:724px;top:706px;font-size:12px;color:#333;">Grayson Stebbins</div>
<div class="t" style="left:882px;top:706px;font-size:12px;color:#333;">2022-03-08 00:21:27</div>
<div class="a" style="left:34px;top:747px;width:114px;height:26px;border:1px solid #3a7fa3;border-radius:3px;background:#fff"></div>
<svg class="a" style="left:43px;top:754px;" width="11" height="11" viewBox="0 0 11 11"><rect x="0" y="4.0" width="11" height="3" rx="0.6" fill="#3a7fa3"/><rect x="4.0" y="0" width="3" height="11" rx="0.6" fill="#3a7fa3"/></svg>
<div class="t" style="left:59.30000000000001px;top:754px;font-size:12px;color:#3a7fa3;font-weight:bold;">Business Unit</div>
<div class="a" style="left:162px;top:747px;width:175px;height:26px;border:1px solid #cfcfcf;border-radius:3px;background:#fff"></div>
<svg class="a" style="left:171px;top:751.8px;" width="12" height="14" viewBox="0 0 12 14">
<path d="M0.5 2.6 H11.5" stroke="#c8c8c8" stroke-width="1.1"/>
<path d="M4 2.6 V1.4 Q4 0.6 4.8 0.6 H7.2 Q8 0.6 8 1.4 V2.6" fill="none" stroke="#c8c8c8" stroke-width="1"/>
<path d="M1.8 2.6 V12.4 Q1.8 13.4 2.8 13.4 H9.2 Q10.2 13.4 10.2 12.4 V2.6" fill="none" stroke="#c8c8c8" stroke-width="1.1"/>
<path d="M4.3 4.6 V11.4 M6 4.6 V11.4 M7.7 4.6 V11.4" stroke="#c8c8c8" stroke-width="0.9"/>
</svg>
<div class="t" style="left:188.5px;top:754px;font-size:12px;color:#c8c8c8;font-weight:bold;">Selected Business Units</div>
</div>
<div class="a" style="left:173.5px;top:456px;width:900px;height:278px;background:#fff;border-radius:4px;border-top:1px solid #e4e4e4;box-shadow:0 2px 7px rgba(0,0,0,.10), 0 6px 4px rgba(0,0,0,.075)"></div>
<div class="t" style="left:194px;top:478.5px;font-size:25px;color:#3a7fa3;font-family:'Liberation Serif',serif;-webkit-text-stroke:0.45px #3a7fa3;">Add Business Unit</div>
<svg class="a" style="left:860px;top:474px;" width="14" height="14" viewBox="0 0 14 14"><path d="M1.2 1.2 L12.8 12.8 M12.8 1.2 L1.2 12.8" stroke="#8a8a8a" stroke-width="2.4"/></svg>
<div class="t" style="left:290.5px;width:80px;text-align:right;top:533.5px;font-size:13px;color:#333;">Name</div>
<div class="t" style="left:270.5px;width:100px;text-align:right;top:579.5px;font-size:13px;color:#333;">Description</div>
<div class="a" style="left:380px;top:527px;width:492px;height:26px;border:1px solid #3a7fa3;box-shadow:0 1px 8px rgba(90,140,170,.18)"></div>
<div class="a" style="left:389px;top:532.8px;width:1.8px;height:14.3px;background:#9bbdd2"></div>
<div class="a" style="left:380px;top:573px;width:492px;height:89.5px;border:1px solid #c8c8c8"></div>
<div class="a" style="left:194px;top:688px;width:46px;height:26px;background:#3a7fa3;border-radius:3px"></div>
<div class="t" style="left:203px;top:696px;font-size:12px;color:#fff;font-weight:bold;">Save</div>
<div class="t" style="left:249.5px;top:694px;font-size:14px;color:#888;">or</div>
<div class="t" style="left:267.3px;top:694px;font-size:14px;color:#555;text-decoration:underline;">cancel</div>
<svg class="a" style="left:670px;top:692px;filter:drop-shadow(0 1px 1px rgba(0,0,0,.3))" width="16" height="22" viewBox="0 0 16 22"><path d="M3.2 3.6 V15.6 L5.9 12.8 L8.3 18.5 L10.8 17.5 L8.4 12 H12.3 Z" fill="#000" stroke="#fff" stroke-width="1.3" stroke-linejoin="round"/></svg>
</div></div>
<svg class="a" style="left:877px;top:443px;" width="5" height="5" viewBox="0 0 5 5"><path d="M0 0 H4 Q1.5 0.5 0.8 3.5 L0 0Z" fill="#000"/></svg>
<svg class="a" style="left:877px;top:783px;" width="8" height="6" viewBox="0 0 8 6"><path d="M1 0 Q1.5 4 7 5 H1Z" fill="#000"/></svg>
<svg class="a" style="left:1303px;top:443px;" width="8" height="8" viewBox="0 0 8 8"><path d="M0 0 H7 V7 Q6 1.5 0 0Z" fill="#000"/></svg>
<svg class="a" style="left:1301px;top:779px;" width="10" height="10" viewBox="0 0 10 10"><path d="M9 0 V9 H0 Q7 9 9 0Z" fill="#000"/></svg>
<svg class="a" style="left:100px;top:370px;" width="110" height="110" viewBox="0 0 110 110"><path d="M17.5 14.5 L84 88" stroke="#000" stroke-width="4.4" stroke-linecap="round"/><path d="M69 89.2 L93.5 101.7 L84.2 75.5Z" fill="#000"/></svg>
<div class="a" style="left:59.900000000000006px;top:346.4px;width:37px;height:36px;border-radius:50%;background:#fff;box-shadow:1px 3px 4px rgba(0,0,0,.55)"></div>
<div class="a" style="left:62.900000000000006px;top:347.7px;width:31px;height:31px;border-radius:50%;background:#313131;color:#fff;font-weight:bold;font-size:15.5px;text-align:center;line-height:31px;-webkit-text-stroke:0.3px #fff">1</div>
<div class="a" style="left:281.0px;top:520.5px;width:37px;height:36px;border-radius:50%;background:#fff;box-shadow:1px 3px 4px rgba(0,0,0,.55)"></div>
<div class="a" style="left:284.0px;top:521.8px;width:31px;height:31px;border-radius:50%;background:#313131;color:#fff;font-weight:bold;font-size:15.5px;text-align:center;line-height:31px;-webkit-text-stroke:0.3px #fff">2</div>
<div class="a" style="left:254.89999999999998px;top:570.6px;width:37px;height:36px;border-radius:50%;background:#fff;box-shadow:1px 3px 4px rgba(0,0,0,.55)"></div>
<div class="a" style="left:257.9px;top:571.9px;width:31px;height:31px;border-radius:50%;background:#313131;color:#fff;font-weight:bold;font-size:15.5px;text-align:center;line-height:31px;-webkit-text-stroke:0.3px #fff">3</div>
<div class="a" style="left:143.9px;top:681.5px;width:37px;height:36px;border-radius:50%;background:#fff;box-shadow:1px 3px 4px rgba(0,0,0,.55)"></div>
<div class="a" style="left:146.9px;top:682.8px;width:31px;height:31px;border-radius:50%;background:#313131;color:#fff;font-weight:bold;font-size:15.5px;text-align:center;line-height:31px;-webkit-text-stroke:0.3px #fff">4</div>
</body></html>
